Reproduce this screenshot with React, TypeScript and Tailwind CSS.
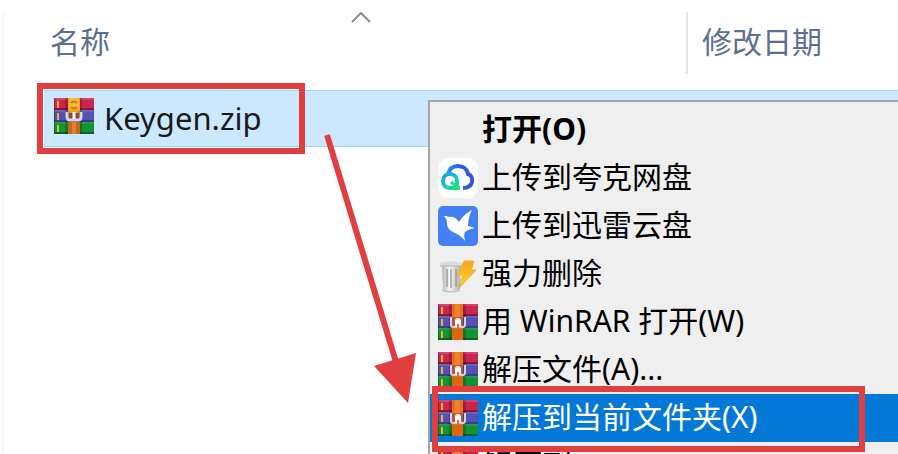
import { ReactNode } from "react";

const files = [{ id: 1, name: "Keygen.zip", modified: "" }];

function Books() {
  return (
    <>
      {/* red, blue and green book */}
      <rect x="0" y="1" width="40" height="12" fill="#c9254f" />
      <rect x="0" y="1" width="40" height="2" fill="#d3456a" />
      <rect x="0" y="11" width="40" height="2" fill="#8d1638" />
      <rect x="0" y="13" width="40" height="12" fill="#5351b4" />
      <rect x="0" y="13" width="40" height="2" fill="#6664c2" />
      <rect x="0" y="23" width="40" height="2" fill="#3c3a8c" />
      <rect x="0" y="25" width="40" height="12" fill="#159136" />
      <rect x="0" y="25" width="40" height="2" fill="#229e44" />
      <rect x="0" y="35" width="40" height="2" fill="#0c6424" />
      <rect x="11" y="1" width="3" height="36" fill="#000" opacity="0.2" />
      <rect x="25" y="1" width="3" height="36" fill="#000" opacity="0.2" />
      <path d="M4 4v7M4 16v7M4 28v7" stroke="#f0b429" strokeWidth="2" />
      <path d="M0 1v36" stroke="#000" strokeOpacity="0.25" strokeWidth="2" />
    </>
  );
}

function WinRarIcon() {
  return (
    <svg viewBox="0 0 40 38" className="h-[38px] w-10 shrink-0" aria-hidden="true">
      <Books />
      <rect x="14" y="1" width="11" height="36" fill="#e8701a" />
      <rect x="17" y="1" width="5" height="13" fill="#f1802b" />
      <rect x="14" y="26" width="11" height="11" fill="#e06412" />
      <path d="M14 14h11v10H14z" fill="#c0533f" />
      <path
        d="M13 14v8q0 2 2 2h10q2 0 2-2v-8"
        fill="none"
        stroke="#d9cfe0"
        strokeWidth="2"
      />
      <path d="M17 24v-6q0-3 3-3t3 3v6z" fill="#fff" />
      <path d="M20 21v4" stroke="#e8701a" strokeWidth="2" />
    </svg>
  );
}

function ZipFileIcon() {
  return (
    <svg viewBox="0 0 40 38" className="h-[38px] w-10 shrink-0" aria-hidden="true">
      <Books />
      <rect x="14" y="25" width="12" height="12" fill="#c4671c" />
      <rect x="18" y="25" width="4" height="12" fill="#dd8328" />
      <path d="M14 1h12v13l-2 3h-8l-2-3z" fill="#eda31d" />
      <path d="M15 3l2-2h6l2 2v7l-2 3h-6l-2-3z" fill="#f7b92f" />
      <path d="M17 6q3-3 6 0M17 10q3 3 6 0" fill="none" stroke="#c67f12" strokeWidth="2" />
      <path d="M15 16h10v6H15z" fill="#8d4a35" />
      <path
        d="M13 15v5q0 3 3 3h8q3 0 3-3v-5"
        fill="none"
        stroke="#d4d6dc"
        strokeWidth="3"
      />
      <path d="M20 15v7" stroke="#f4f4f4" strokeWidth="3" />
    </svg>
  );
}

function QuarkIcon() {
  return (
    <svg viewBox="0 0 40 40" className="size-10 shrink-0" aria-hidden="true">
      <defs>
        <linearGradient id="quark" x1="0" y1="0" x2="1" y2="0">
          <stop offset="0" stopColor="#2a8df0" />
          <stop offset="0.5" stopColor="#2c5cf0" />
          <stop offset="1" stopColor="#3550e8" />
        </linearGradient>
        <linearGradient id="quarkDrop" x1="0" y1="0" x2="1" y2="1">
          <stop offset="0" stopColor="#1a9dee" />
          <stop offset="0.5" stopColor="#17c6d2" />
          <stop offset="1" stopColor="#1fe36e" />
        </linearGradient>
      </defs>
      <rect width="40" height="40" rx="11" fill="#fff" />
      <path
        d="M10 17C11 11 15 8 20 8c5 0 9 3 10 8 3 1 5 4 4 8s-4 6-9 6"
        fill="none"
        stroke="url(#quark)"
        strokeWidth="4"
      />
      <path
        d="M22 30H12c-4 0-7-3-7-7 0-4 3-7 7-7s7 3 7 7v7"
        fill="none"
        stroke="url(#quarkDrop)"
        strokeWidth="4"
      />
      <path d="M13 24l6 5" stroke="#1fdf7c" strokeWidth="3" />
    </svg>
  );
}

function ThunderIcon() {
  return (
    <svg viewBox="0 0 40 40" className="size-10 shrink-0" aria-hidden="true">
      <rect width="40" height="40" rx="5" fill="#4380f5" />
      <path
        d="M6 10c2 0 4 0 5 1 4-1 7 1 10 5 3-5 7-9 13-12-3 6-4 11-4 16l7 2c-5 1-8 2-10 4-1 2-1 4 0 9-3-4-6-6-10-8-5-2-8-5-8-10 0-3-1-5-3-7z"
        fill="#fff"
      />
    </svg>
  );
}

function ShredIcon() {
  return (
    <svg viewBox="0 0 40 40" className="size-10 shrink-0" aria-hidden="true">
      <defs>
        <linearGradient id="bin" x1="0" y1="0" x2="1" y2="0">
          <stop offset="0" stopColor="#b5b5b5" />
          <stop offset="0.4" stopColor="#f6f6f6" />
          <stop offset="1" stopColor="#b0b0b0" />
        </linearGradient>
        <linearGradient id="bolt" x1="0" y1="0" x2="0" y2="1">
          <stop offset="0" stopColor="#f7a326" />
          <stop offset="1" stopColor="#fbdc1e" />
        </linearGradient>
      </defs>
      <path d="M4 35q9 4 18 0v2q-9 3-18 0z" fill="#c4c4c4" />
      <path d="M4 11h19l-1 24c-5 2-12 2-17 0z" fill="url(#bin)" />
      <path d="M9 15v18M13 15v19M18 15v18" stroke="#8f8f8f" strokeWidth="2" opacity="0.6" />
      <path d="M2 9c6-2 16-2 22 0v3H2z" fill="#dadada" />
      <path d="M2 12h22" stroke="#b4b4b4" />
      <path d="M26 7h10l-3 9h5L21 34l4-13h-6z" fill="url(#bolt)" stroke="#f0b02a" />
    </svg>
  );
}

type Item = {
  label: string;
  icon?: ReactNode;
  bold?: boolean;
  active?: boolean;
};

const items: Item[] = [
  { label: "打开(O)", bold: true },
  { label: "上传到夸克网盘", icon: <QuarkIcon /> },
  { label: "上传到迅雷云盘", icon: <ThunderIcon /> },
  { label: "强力删除", icon: <ShredIcon /> },
  { label: "用 WinRAR 打开(W)", icon: <WinRarIcon /> },
  { label: "解压文件(A)...", icon: <WinRarIcon /> },
  { label: "解压到当前文件夹(X)", icon: <WinRarIcon />, active: true },
  { label: "解压到 \"Keygen\\\"(E)", icon: <WinRarIcon /> },
];

function ContextMenu() {
  return (
    <ul className="absolute top-[100px] right-0 left-[428px] border-t-2 border-l-2 border-[#a5a5a5] bg-[#efefef] pt-1">
      {items.map((item) => (
        <li key={item.label} className="relative">
          <button
            type="button"
            className={`flex h-12 w-full items-center gap-1 pl-2 text-left whitespace-nowrap ${
              item.active ? "bg-[#0478d7] text-white" : "text-black"
            } ${item.bold ? "font-bold" : ""}`}
          >
            {item.icon ?? <span className="w-10 shrink-0" />}
            <span className="pb-[2px]">{item.label}</span>
          </button>
          {item.active && (
            <div className="pointer-events-none absolute -top-2 right-[33px] -bottom-[10px] left-[2px] z-10 border-6 border-[#e13e40]" />
          )}
        </li>
      ))}
    </ul>
  );
}

export default function App() {
  return (
    <main className="relative h-screen overflow-hidden bg-white pl-[3px] font-['Noto_Sans','Noto_Sans_CJK_SC',sans-serif] text-[30px] leading-10">
      <div className="mt-3 h-full border-l border-[#efefef] pl-10">
        <table className="w-full table-fixed border-collapse">
          <thead>
            <tr className="h-[78px] text-left align-top text-[#5b6f92]">
              <th className="relative w-[642px] p-0 font-normal">
                <button type="button" className="mt-[10px] block pl-[6px]">
                  名称
                </button>
                <svg
                  viewBox="0 0 20 12"
                  className="absolute top-0 left-[307px] h-3 w-5"
                  aria-hidden="true"
                >
                  <path d="M1 10l9-9 9 9" fill="none" stroke="#8a8a8a" strokeWidth="2" />
                </svg>
              </th>
              <th className="p-0 font-normal">
                <div className="h-[62px] border-l-2 border-[#e3e3e3] pt-[10px] pl-[14px]">
                  <button type="button">修改日期</button>
                </div>
              </th>
            </tr>
          </thead>
          <tbody>
            {files.map((file) => (
              <tr
                key={file.id}
                className="h-14 border-y border-[#99d1ff] bg-[#cce8ff] text-[#1a1a1a]"
              >
                <td className="relative p-0">
                  <div className="flex items-center gap-[10px] pb-1 pl-[10px]">
                    <ZipFileIcon />
                    <span className="pt-1 text-[31px]">{file.name}</span>
                  </div>
                  <div className="pointer-events-none absolute -top-2 -bottom-2 -left-[7px] w-[268px] border-6 border-[#e13e40]" />
                </td>
                <td className="p-0">{file.modified}</td>
              </tr>
            ))}
          </tbody>
        </table>
      </div>

      <ContextMenu />

      {/* arrow from the file to the menu item */}
      <svg
        viewBox="0 0 100 280"
        className="pointer-events-none absolute top-[130px] left-[320px] h-[280px] w-[100px]"
        aria-hidden="true"
      >
        <path d="M7 5L76 232" fill="none" stroke="#e13e40" strokeWidth="6" />
        <path d="M54 236l42-13-8 50z" fill="#e13e40" />
      </svg>
    </main>
  );
}
